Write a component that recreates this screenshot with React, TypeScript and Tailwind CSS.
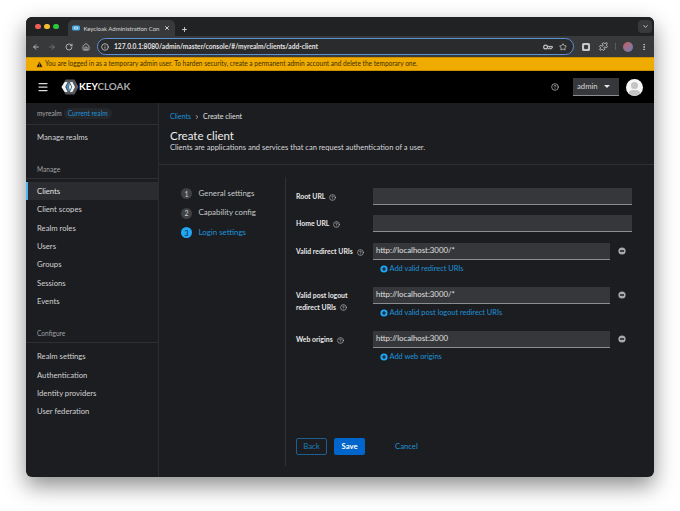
import { ArrowLeft, ArrowRight, ChevronDown, EllipsisVertical, Home, Info, Plus, RotateCw, Star, TriangleAlert, X, Menu, Puzzle, CircleHelp, ChevronRight } from "lucide-react";

const font = "font-['Lato','Noto_Sans',sans-serif]";

const manageItems = ["Clients", "Client scopes", "Realm roles", "Users", "Groups", "Sessions", "Events"];
const configureItems = ["Realm settings", "Authentication", "Identity providers", "User federation"];

const steps = [
  { n: 1, label: "General settings" },
  { n: 2, label: "Capability config" },
  { n: 3, label: "Login settings", active: true },
];

function Help() {
  return <CircleHelp className="h-[7px] w-[7px] text-[#c7c7c7]" strokeWidth={2} />;
}

function KeycloakLogo() {
  return (
    <svg viewBox="0 0 18 16" className="h-[16px] w-[18px] shrink-0">
      <polygon points="4.5,0.5 13.5,0.5 17.5,8 13.5,15.5 4.5,15.5 0.5,8" fill="#55575a" />
      <polygon points="0.5,8 3.8,3 6.6,3 4.2,8 6.6,13 3.8,13" fill="#f2f2f2" />
      <polygon points="14,8 11.4,3 8.9,3 11.2,8 8.9,13 11.4,13" fill="#f2f2f2" />
      <polygon points="5.5,8 7.4,4 9,4 7,8 9,12 7.4,12" fill="#2f9fe0" />
      <polygon points="10.4,8 8.8,4.8 7.8,8 8.8,11.2" fill="#e8e8e8" />
    </svg>
  );
}

function Favicon() {
  return (
    <svg viewBox="0 0 8 6" className="h-[6px] w-[8px] shrink-0">
      <rect x="0" y="0.5" width="8" height="5" rx="1.5" fill="#4aa7e0" />
      <polygon points="2,3 3,1.5 3.8,1.5 3,3 3.8,4.5 3,4.5" fill="#ffffff" />
      <polygon points="6,3 5,1.5 4.2,1.5 5,3 4.2,4.5 5,4.5" fill="#ffffff" />
    </svg>
  );
}

function PasswordKey() {
  return (
    <svg viewBox="0 0 10 6" className="h-[6px] w-[10px] shrink-0" fill="none" stroke="currentColor">
      <circle cx="2.6" cy="3" r="1.9" strokeWidth="1.2" />
      <path d="M4.6 2.4H9.4V3.8H8.4V4.8H7.2V3.8H6.2V4.8H4.8" strokeWidth="1" />
    </svg>
  );
}

function PlusDisc() {
  return (
    <svg viewBox="0 0 8 8" className="h-[8px] w-[8px] shrink-0">
      <circle cx="4" cy="4" r="3.6" fill="#1fa7f8" />
      <path d="M4 2V6M2 4H6" stroke="#1b1d21" strokeWidth="1.2" />
    </svg>
  );
}

function MinusDisc() {
  return (
    <svg viewBox="0 0 8 8" className="h-[8px] w-[8px] shrink-0">
      <circle cx="4" cy="4" r="3.6" fill="#a8abae" />
      <path d="M2 4H6" stroke="#1b1d21" strokeWidth="1.3" />
    </svg>
  );
}

function Input({ value }: { value?: string }) {
  return (
    <div className="flex h-[17px] flex-1 items-center border-b border-[#8a8d90] bg-[#36373a] px-[3px] text-[7.8px] text-[#e0e0e0]">
      {value}
    </div>
  );
}

function Label({ children }: { children: React.ReactNode }) {
  return (
    <div className="w-[77px] shrink-0 self-start pt-[3px] text-[6.9px] leading-[11.5px] font-bold text-[#e8e8e8]">
      {children}
      <span className="ml-[4px] inline-block align-[-1.5px]"><Help /></span>
    </div>
  );
}

function UriRow({ label, value, add }: { label: React.ReactNode; value: string; add: string }) {
  return (
    <div className="flex h-[44px]">
      <Label>{label}</Label>
      <div className="flex flex-1 flex-col">
        <div className="flex items-center">
          <Input value={value} />
          <div className="-mt-px flex w-[22px] shrink-0 justify-center pl-px">
            <MinusDisc />
          </div>
        </div>
        <div className="mt-[3px] ml-[6.5px] flex items-center gap-[2px] text-[7.4px] text-[#1f93d8]">
          <PlusDisc />
          {add}
        </div>
      </div>
    </div>
  );
}

export default function App() {
  return (
    <div className={`${font} h-[511px] w-[680px] overflow-hidden bg-white pt-[17px] pl-[26px]`}>
      <div className="flex h-[460px] w-[628px] flex-col overflow-hidden rounded-[6px] bg-[#1b1d21] shadow-[0_9px_22px_rgba(0,0,0,0.45)]">
        {/* tab strip */}
        <div className="flex h-[19px] items-end bg-[#202223] pl-[9px] pr-[2px]">
          <div className="flex h-[16px] items-center gap-[3.6px] self-center">
            <span className="h-[5.6px] w-[5.6px] rounded-full bg-[#ec5f57]" />
            <span className="h-[5.6px] w-[5.6px] rounded-full bg-[#f4bd2f]" />
            <span className="h-[5.6px] w-[5.6px] rounded-full bg-[#2ac83f]" />
          </div>
          <div className="ml-[9.5px] flex h-[16px] w-[107px] items-center gap-[3px] rounded-t-[5px] bg-[#38393b] pl-[4px] pr-[5px] text-[6px] whitespace-nowrap text-[#d8d8d8]">
            <Favicon />
            <span className="flex-1">Keycloak Administration Con</span>
            <X className="h-[6px] w-[6px] shrink-0 text-white" strokeWidth={3} />
          </div>
          <Plus className="mb-[3.5px] ml-[6px] h-[7px] w-[7px] text-[#d8d8d8]" strokeWidth={3} />
          <div className="mb-[3px] ml-auto flex h-[13px] w-[14px] items-center justify-center rounded-[4px] bg-[#38393b]">
            <ChevronDown className="h-[7px] w-[7px] text-[#d8d8d8]" strokeWidth={3} />
          </div>
        </div>
        {/* toolbar */}
        <div className="flex h-[21px] items-center bg-[#38393b] pl-[6px] text-[#c4c7c5]">
          <ArrowLeft className="h-[8px] w-[8px]" strokeWidth={2.5} />
          <ArrowRight className="ml-[8px] h-[8px] w-[8px] text-[#77797b]" strokeWidth={2.5} />
          <RotateCw className="ml-[9px] h-[8px] w-[8px]" strokeWidth={2.5} />
          <Home className="ml-[8.5px] h-[8px] w-[8px]" strokeWidth={2.5} />
          <div className="ml-[7.5px] flex h-[17px] w-[477px] items-center rounded-full border border-[#5b8fd6] bg-[#2a2b2d] pl-[3px] pr-[6px]">
            <Info className="h-[8px] w-[8px]" strokeWidth={2.5} />
            <span className="ml-[5px] text-[6.65px] font-bold text-[#e2e2e2]">127.0.0.1:8080/admin/master/console/#/myrealm/clients/add-client</span>
            <span className="ml-auto"><PasswordKey /></span>
            <Star className="ml-[6px] h-[8px] w-[8px]" strokeWidth={2.5} />
          </div>
          <div className="ml-[8px] flex h-[8px] w-[8px] items-center justify-center rounded-[1.5px] bg-[#c4c7c5]">
            <div className="h-[4px] w-[4px] rounded-[1px] bg-[#38393b]" />
          </div>
          <Puzzle className="ml-[8.5px] h-[9px] w-[9px]" strokeWidth={2.5} />
          <div className="ml-[7px] h-[7px] w-px bg-[#5a5c5e]" />
          <div className="ml-[7px] h-[10px] w-[10px] rounded-full bg-gradient-to-br from-[#c8555f] to-[#5d7fb5]" />
          <EllipsisVertical className="ml-[7px] h-[8px] w-[8px]" strokeWidth={3} />
        </div>
        {/* warning banner */}
        <div className="flex h-[14px] items-center gap-[2px] border-y border-[#c98f00] bg-[#f0ab00] pl-[10px] text-[6.55px] text-[#3c2f00]">
          <TriangleAlert className="h-[7px] w-[7px] fill-[#151515] text-[#f0ab00]" strokeWidth={2} />
          You are logged in as a temporary admin user. To harden security, create a permanent admin account and delete the temporary one.
        </div>
        {/* masthead */}
        <div className="flex h-[32px] items-center bg-black pl-[11px] pr-[11px]">
          <Menu className="h-[12px] w-[12px] text-[#dcdcdc]" strokeWidth={2.5} />
          <div className="ml-[12px] flex items-center">
            <KeycloakLogo />
            <span className="text-[9.9px] leading-none font-bold text-white">
              KEY<span className="text-[#a9abae]">CLOAK</span>
            </span>
          </div>
          <CircleHelp className="ml-auto h-[8px] w-[8px] text-[#d2d2d2]" strokeWidth={2} />
          <div className="ml-[14px] flex h-[18px] w-[46px] items-center justify-between border-b border-[#8a8d90] bg-[#36373a] pl-[4px] pr-[9px] text-[7.7px] text-[#d8d8d8]">
            admin
            <span className="h-0 w-0 border-x-[3px] border-t-[3px] border-x-transparent border-t-[#e8e8e8]" />
          </div>
          <div className="relative ml-[7px] h-[17px] w-[17px] overflow-hidden rounded-full bg-[#f5f5f5]">
            <div className="absolute top-[3px] left-[5px] h-[7px] w-[7px] rounded-full bg-[#c4c4c4]" />
            <div className="absolute top-[11px] left-[2px] h-[10px] w-[13px] rounded-full bg-[#c4c4c4]" />
          </div>
        </div>
        {/* body */}
        <div className="flex min-h-0 flex-1">
          <aside className="w-[133px] shrink-0 border-r border-[#2b2d31] text-[7.7px] text-[#d2d2d2]">
            <div className="flex h-[22px] items-center gap-[2px] border-b border-[#2e3034] pl-[11px]">
              <span className="text-[6.6px] text-[#a8a8a8]">myrealm</span>
              <span className="rounded-full bg-[#25272b] px-[4px] py-[1px] text-[6.6px] text-[#1f93d8]">Current realm</span>
            </div>
            <div className="flex h-[24px] items-center pl-[11px] pt-[2px]">Manage realms</div>
            <div className="mt-[11px] flex h-[19px] items-center border-b border-[#2e3034] pl-[11px] pt-[2px] text-[6.6px] text-[#a0a0a0]">Manage</div>
            <div className="mt-[3px]">
              {manageItems.map((item, i) => (
                <div
                  key={item}
                  className={`flex h-[18.3px] items-center pt-[1.5px] ${i === 0 ? "border-l-[2px] border-[#4fb3f6] bg-[#2a2c30] pl-[9px] text-[#e0e0e0]" : "pl-[11px]"}`}
                >
                  {item}
                </div>
              ))}
            </div>
            <div className="mt-[14px] flex h-[19px] items-center border-b border-[#2e3034] pl-[11px] pt-[2px] text-[6.6px] text-[#a0a0a0]">Configure</div>
            <div className="mt-[4px]">
              {configureItems.map((item) => (
                <div key={item} className="flex h-[18.3px] items-center pl-[11px] pt-[1.5px]">{item}</div>
              ))}
            </div>
          </aside>
          <main className="flex min-w-0 flex-1 flex-col text-[#e0e0e0]">
            <div className="h-[62px] shrink-0 border-b border-[#2e3034] pl-[11px] pt-[9px]">
              <div className="flex h-[9px] items-center text-[7px]">
                <span className="text-[#1f93d8]">Clients</span>
                <ChevronRight className="mx-[3px] h-[6px] w-[6px] text-[#d2d2d2]" strokeWidth={3} />
                <span>Create client</span>
              </div>
              <div className="mt-[8px] text-[11.5px] leading-[14px] text-[#eeeeee]">Create client</div>
              <div className="text-[7.5px] leading-[10px] text-[#d8d8d8]">Clients are applications and services that can request authentication of a user.</div>
            </div>
            <div className="flex min-h-0 flex-1 pt-[12px] pb-[11px]">
              <div className="w-[127px] shrink-0 border-r border-[#2e3034] pl-[22px] pt-[7px]">
                {steps.map((step) => (
                  <div key={step.n} className="flex h-[19.5px] items-center gap-[6.5px] text-[7.9px]">
                    <span className={`flex h-[11px] w-[11px] items-center justify-center rounded-full text-[7px] ${step.active ? "bg-[#1fa7f8] text-[#1b1d21]" : "bg-[#3f4145] text-[#d2d2d2]"}`}>
                      {step.n}
                    </span>
                    <span className={step.active ? "text-[#1f93d8]" : "text-[#c8c8c8]"}>{step.label}</span>
                  </div>
                ))}
              </div>
              <div className="flex flex-1 flex-col pt-[11px] pr-[22px] pb-[11px] pl-[10px]">
                <div className="flex h-[27px]">
                  <Label>Root URL</Label>
                  <Input />
                </div>
                <div className="flex h-[28px]">
                  <Label>Home URL</Label>
                  <Input />
                </div>
                <UriRow label="Valid redirect URIs" value="http://localhost:3000/*" add="Add valid redirect URIs" />
                <UriRow label={<>Valid post logout<br />redirect URIs</>} value="http://localhost:3000/*" add="Add valid post logout redirect URIs" />
                <UriRow label="Web origins" value="http://localhost:3000" add="Add web origins" />
                <div className="mt-auto flex h-[17px] items-center gap-[7px] text-[7.7px]">
                  <span className="flex h-[17px] w-[31px] items-center justify-center rounded-[2px] border border-[#1b5f94] text-[#1f7fbd]">Back</span>
                  <span className="flex h-[17px] w-[31px] items-center justify-center rounded-[2px] bg-[#0066cc] font-bold text-white">Save</span>
                  <span className="ml-[23px] text-[#1f93d8]">Cancel</span>
                </div>
              </div>
            </div>
          </main>
        </div>
      </div>
    </div>
  );
}
